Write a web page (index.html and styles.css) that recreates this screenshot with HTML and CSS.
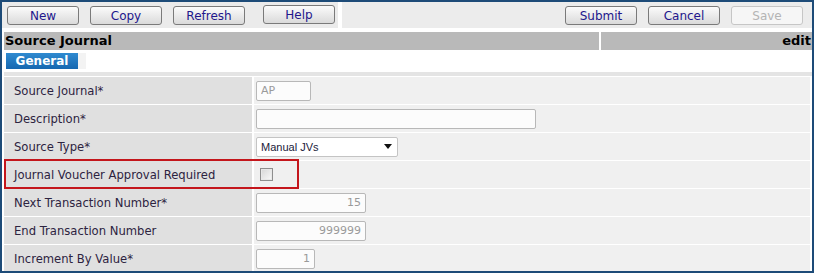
FILE: index.html
```html
<!DOCTYPE html>
<html lang="en">
<head>
    <meta charset="UTF-8">
    <title>Source Journal</title>
    <link rel="stylesheet" href="styles.css">
</head>
<body>
    <div class="frame">
        <div class="toolbar">
            <div class="toolbar-left">
                <button class="btn">New</button>
                <button class="btn">Copy</button>
                <button class="btn">Refresh</button>
                <button class="btn btn-help">Help</button>
            </div>
            <div class="toolbar-right">
                <button class="btn">Submit</button>
                <button class="btn">Cancel</button>
                <button class="btn" disabled>Save</button>
            </div>
        </div>

        <div class="title-bar">
            <div class="title">Source Journal</div>
            <div class="mode">edit</div>
        </div>

        <div class="tabs">
            <span class="tab active">General</span>
            <span class="tab-end"></span>
        </div>

        <div class="form">
            <div class="label">Source Journal*</div>
            <div class="value"><input class="field field-code" type="text" value="AP" disabled></div>

            <div class="label">Description*</div>
            <div class="value"><input class="field field-desc" type="text"></div>

            <div class="label">Source Type*</div>
            <div class="value">
                <div class="select">
                    <span>Manual JVs</span>
                    <span class="arrow"></span>
                </div>
            </div>

            <div class="label">Journal Voucher Approval Required</div>
            <div class="value"><span class="check"></span></div>

            <div class="label">Next Transaction Number*</div>
            <div class="value"><input class="field field-num" type="text" value="15" disabled></div>

            <div class="label">End Transaction Number</div>
            <div class="value"><input class="field field-num" type="text" value="999999" disabled></div>

            <div class="label">Increment By Value*</div>
            <div class="value"><input class="field field-small" type="text" value="1" disabled></div>
        </div>

        <!-- annotation box round the approval row -->
        <div class="highlight"></div>
    </div>
</body>
</html>
```

FILE: styles.css
```css
* {
    box-sizing: border-box;
}

body {
    margin: 0;
    font-family: "DejaVu Sans", Verdana, sans-serif;
    background: #fff;
}

.frame {
    position: relative;
    width: 814px;
    height: 273px;
    border: 2px solid #1d4b78;
    background: #fff;
    overflow: hidden;
}

.toolbar {
    display: flex;
    height: 26px;
    gap: 4px;
}

.toolbar-left {
    display: flex;
    align-items: flex-start;
    width: 336px;
    padding: 4px 0 0 5px;
    gap: 11px;
    background: #ebebeb;
}

.toolbar-right {
    flex: 1;
    display: flex;
    justify-content: flex-end;
    align-items: flex-start;
    padding: 4px 9px 0 0;
    gap: 11px;
    background: #ececec;
}

.btn {
    width: 72px;
    height: 19px;
    padding: 0;
    font-family: "DejaVu Sans", Tahoma, sans-serif;
    font-size: 12px;
    line-height: 16px;
    color: #22168c;
    background: linear-gradient(#fbfbfb, #dadada);
    border: 1px solid #7a7a7a;
    border-radius: 3px;
}

.btn-help {
    margin-top: -1px;
    margin-left: 7px;
}

.btn:disabled {
    color: #b4b4b4;
    background: #f6f6f6;
    border-color: #c6c6c6;
}

.title-bar {
    display: flex;
    gap: 2px;
    margin: 4px 0 0 2px;
    height: 18px;
    font-size: 13px;
    font-weight: bold;
    line-height: 18px;
    color: #000;
}

.title {
    width: 595px;
    padding-left: 1px;
    background: #b9b9b9;
}

.mode {
    flex: 1;
    text-align: right;
    padding-right: 1px;
    background: #b9b9b9;
}

.tabs {
    display: flex;
    margin: 3px 0 0 4px;
    height: 16px;
}

.tab {
    width: 72px;
    font-size: 12px;
    font-weight: bold;
    line-height: 16px;
    text-align: center;
    color: #fff;
    background: linear-gradient(#2f8ad0, #1567b0);
}

.tab-end {
    width: 8px;
    background: #f3f3f3;
}

.form {
    display: grid;
    grid-template-columns: 248px 1fr;
    grid-auto-rows: 27px;
    column-gap: 2px;
    row-gap: 1px;
    margin: 3px 0 0 2px;
    border-top: 4px solid #e4e4e4;
    padding-top: 1px;
    background: #fff;
    font-size: 11.6px;
}

.label {
    display: flex;
    align-items: center;
    padding-left: 10px;
    color: #2d2340;
    background: #e0e0e0;
}

.value {
    display: flex;
    align-items: center;
    padding-left: 2px;
    margin-right: 2px;
    background: #f0f0f0;
}

.field {
    height: 20px;
    padding: 0 4px;
    font-family: "DejaVu Sans", Verdana, sans-serif;
    font-size: 11px;
    color: #9a9a9a;
    background: #fcfcfc;
    border: 1px solid #b8b8b8;
    border-radius: 2px;
}

.field-code {
    width: 55px;
}

.field-desc {
    width: 280px;
}

.field-num {
    width: 110px;
    text-align: right;
}

.field-small {
    width: 59px;
    text-align: right;
}

.select {
    display: flex;
    align-items: center;
    justify-content: space-between;
    width: 142px;
    height: 20px;
    padding: 0 5px 0 4px;
    font-family: "Liberation Sans", Arial, sans-serif;
    font-size: 11px;
    color: #1a1a3a;
    background: #fff;
    border: 1px solid #c4c4c4;
    border-radius: 2px;
}

.arrow {
    width: 0;
    height: 0;
    border-left: 4px solid transparent;
    border-right: 4px solid transparent;
    border-top: 5px solid #111;
}

.check {
    width: 13px;
    height: 13px;
    margin-left: 4px;
    border: 1px solid #8e8e8e;
    background: linear-gradient(135deg, #d6d6d6, #fafafa);
    box-shadow: inset 0 0 0 1px #e8e8e8;
}

.highlight {
    position: absolute;
    left: 2px;
    top: 157px;
    width: 295px;
    height: 30px;
    border: 2px solid #c4161c;
}
```
